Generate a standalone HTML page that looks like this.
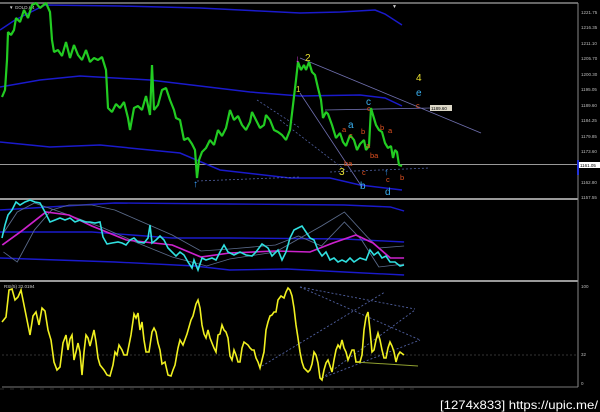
<!DOCTYPE html>
<html><head><style>
html,body{margin:0;padding:0;background:#000;width:600px;height:412px;overflow:hidden}
svg{display:block}
text{font-family:"Liberation Sans",sans-serif}
</style></head><body>
<svg width="600" height="412" viewBox="0 0 600 412" xmlns="http://www.w3.org/2000/svg">
<rect width="600" height="412" fill="#000"/>
<line x1="0" y1="3" x2="578" y2="3" stroke="#888" stroke-width="1.5"/>
<line x1="0" y1="199" x2="578" y2="199" stroke="#999" stroke-width="2"/>
<line x1="0" y1="281" x2="578" y2="281" stroke="#999" stroke-width="2"/>
<line x1="2" y1="387" x2="578" y2="387" stroke="#777" stroke-width="1"/>
<line x1="578" y1="3" x2="578" y2="387" stroke="#888" stroke-width="1"/>
<line x1="0" y1="164.5" x2="578" y2="164.5" stroke="#999" stroke-width="1"/>
<text x="9" y="9" fill="#ccc" font-size="4.5">▼ GOLD,H4</text>
<text x="392" y="8" fill="#ccc" font-size="5">▼</text>
<g fill="#bbb" font-size="4.5">
<text x="581" y="14">1221.75</text><text x="581" y="29">1216.35</text><text x="581" y="45">1211.10</text>
<text x="581" y="60">1205.70</text><text x="581" y="76">1200.30</text><text x="581" y="91">1195.05</text>
<text x="581" y="107">1189.60</text><text x="581" y="122">1184.25</text><text x="581" y="138">1179.85</text>
<text x="581" y="153">1173.60</text><text x="581" y="184">1162.80</text><text x="581" y="199">1157.55</text>
<text x="581" y="288">100</text><text x="581" y="356">32</text><text x="581" y="385">0</text>
</g>
<rect x="578" y="162" width="22" height="6" fill="#fff"/><text x="580" y="167" font-size="4.5" fill="#000">1161.05</text>
<rect x="577" y="160" width="2" height="15" fill="#2233dd"/>
<g fill="none" stroke="#1a1acc" stroke-width="1.5">
<path d="M0 30 L15 20 L45 5 L120 6 L200 8 L260 11 L300 13 L340 12 L375 10 L385 14 L402 25"/>
<path d="M0 87 L40 80 L80 76 L150 80 L250 92 L300 96 L360 95 L385 98 L402 106"/>
<path d="M0 142 L50 147 L100 145 L180 153 L220 170 L290 178 L330 178 L360 185 L402 190"/>
</g>
<g fill="none" stroke="#7070b0" stroke-width="0.8">
<line x1="300" y1="58" x2="481" y2="133"/>
<line x1="300" y1="93" x2="362" y2="187"/>
<line x1="325" y1="110" x2="432" y2="108"/>
</g>
<g fill="none" stroke="#5060a0" stroke-width="0.8" stroke-dasharray="2,2">
<line x1="257" y1="100" x2="300" y2="128"/>
<line x1="280" y1="120" x2="345" y2="170"/>
<line x1="197" y1="181" x2="300" y2="177"/>
<line x1="330" y1="172" x2="430" y2="168"/>
</g>
<polyline fill="none" stroke="#22cc22" stroke-width="2.2" stroke-linejoin="bevel" points="2,97 5,90 7,60 8,32 11,35 14,30 16,18 20,22 24,10 28,18 32,5 36,3 40,8 46,3 50,12 52,40 54,52 58,50 62,56 66,42 70,58 74,45 78,55 82,60 86,50 90,62 94,58 98,60 102,57 106,70 108,108 112,112 116,104 120,108 124,102 128,118 130,130 134,108 138,106 142,110 146,96 150,115 152,65 154,110 158,105 162,90 166,88 170,100 174,110 176,118 180,120 184,140 188,138 192,144 195,150 197,178 199,160 202,152 206,148 210,140 214,145 218,130 222,136 226,128 230,110 234,120 238,116 242,125 246,130 250,122 252,112 256,120 260,128 264,125 266,115 270,120 274,130 278,132 282,135 286,140 290,130 293,105 296,80 298,62 301,70 304,65 306,70 309,62 312,72 315,75 318,88 321,100 323,118 326,112 328,114 332,125 336,138 340,133 343,142 346,146 350,135 354,140 357,150 360,144 364,140 366,150 369,146 371,108 373,115 376,125 379,130 382,132 385,143 388,148 391,146 393,158 395,150 397,152 399,165 402,166"/>
<text x="295" y="62" fill="#e040e0" font-size="10">↓</text>
<text x="193" y="187" fill="#3aa0ff" font-size="10">↑</text>
<text x="384" y="175" fill="#3aa0ff" font-size="9">↑</text>
<g font-size="10">
<text x="305" y="61" fill="#e8e030">2</text><text x="296" y="92" fill="#e8e030" font-size="8">1</text>
<text x="339" y="175" fill="#e8e030">3</text><text x="416" y="81" fill="#e8e030">4</text>
<text x="366" y="105" fill="#3ab0f0">c</text><text x="348" y="128" fill="#3ab0f0">a</text>
<text x="360" y="189" fill="#3ab0f0">b</text><text x="385" y="195" fill="#3ab0f0">d</text>
<text x="416" y="96" fill="#3ab0f0">e</text>
</g>
<g font-size="7.5" fill="#e05020">
<text x="416" y="108">c</text><text x="367" y="111">c</text>
<text x="342" y="132">a</text><text x="349" y="138">c</text><text x="361" y="134">b</text>
<text x="380" y="130">b</text><text x="388" y="133">a</text><text x="366" y="148">a</text>
<text x="370" y="158">ba</text><text x="344" y="166">ba</text><text x="362" y="175">c</text>
<text x="386" y="182">c</text><text x="400" y="180">b</text>
</g>
<rect x="430" y="105" width="22" height="6" fill="#ddd8c8"/><text x="431" y="110" font-size="4.5" fill="#000">1189.60</text>
<g fill="none" stroke-width="1.3">
<g transform="scale(1.148,1)">
<path d="M0 210 L100 203 L200 204 L300 205 L340 207 L352 211" stroke="#1a1acc" stroke-width="1.4"/>
<path d="M0 232 L80 232 L150 238 L200 238 L300 239 L352 242" stroke="#1a1acc" stroke-width="1.4"/>
<path d="M0 258 L100 262 L170 266 L200 270 L250 269 L300 272 L352 275" stroke="#1a1acc" stroke-width="1.4"/>
<path d="M3 233 L15 212 L30 203 L60 215 L90 228 L120 243 L150 257 L180 266 L200 259 L240 252 L280 226 L300 212 L320 237 L330 248 L352 246" stroke="#5a6a8a" stroke-width="0.8"/>
<path d="M3 252 L15 262 L30 230 L45 210 L60 205 L80 205 L100 210 L120 220 L150 235 L175 251 L200 249 L240 245 L260 236 L280 246 L300 222 L315 240 L330 267 L352 264" stroke="#5a6a8a" stroke-width="0.8"/>
<path d="M2 245 L20 230 L40 212 L60 215 L80 226 L110 240 L150 245 L175 257 L200 253 L240 251 L270 252 L290 243 L310 235 L325 243 L340 258 L352 258" stroke="#cc22cc" stroke-width="1.6"/>
</g>
<polyline stroke="#30e0e0" stroke-width="1.6" points="2,238 5,225 8,215 12,210 16,202 20,205 25,202 30,200 35,202 40,203 45,212 50,222 55,220 60,218 65,220 70,218 75,222 80,220 85,222 90,222 95,223 100,222 103,237 107,244 112,243 118,242 122,243 126,245 130,240 134,238 138,242 144,243 148,238 150,225 152,243 156,240 160,236 164,240 168,248 172,252 176,256 180,252 184,255 188,262 192,268 194,260 198,270 202,258 206,260 212,258 216,260 220,252 224,245 228,252 234,255 240,252 246,255 252,256 256,252 262,244 268,248 272,256 278,250 282,260 286,252 290,238 294,230 298,228 302,226 306,232 310,238 314,240 318,250 322,256 326,252 330,260 334,258 338,262 342,260 346,262 350,258 354,262 360,258 366,260 370,250 374,255 378,252 382,258 386,256 390,262 395,262 400,266 404,265"/>
</g>
<line x1="2" y1="355" x2="578" y2="355" stroke="#666" stroke-width="0.6" stroke-dasharray="2,2"/>
<text x="4" y="288" fill="#ccc" font-size="4.5">RSI(5) 32.0194</text>
<g fill="none" stroke="#5060a0" stroke-width="0.9" stroke-dasharray="2,2">
<line x1="300" y1="287" x2="415" y2="309"/><line x1="300" y1="287" x2="420" y2="340"/>
<line x1="262" y1="366" x2="385" y2="292"/><line x1="322" y1="378" x2="415" y2="310"/>
<line x1="322" y1="378" x2="420" y2="340"/>
</g>
<line x1="355" y1="362" x2="418" y2="366" stroke="#90a030" stroke-width="1"/>
<polyline fill="none" stroke="#f0f020" stroke-width="1.6" points="2,322 6,317 9,290 12,289 15,300 18,297 21,290 24,305 27,320 30,335 33,316 36,312 39,325 42,308 45,311 48,330 51,340 54,362 57,370 60,367 63,343 66,335 68,350 70,339 72,335 74,360 76,352 78,343 80,352 82,375 84,352 86,335 88,338 90,346 94,330 96,342 98,358 100,365 104,370 107,375 110,376 113,365 115,352 117,355 119,345 122,350 124,355 127,355 131,335 134,314 136,318 138,313 140,330 142,322 144,340 146,352 149,352 152,332 154,328 156,332 158,343 160,350 162,364 165,362 168,375 171,376 173,370 175,365 178,348 180,340 183,345 187,334 191,320 193,316 196,304 198,300 200,308 202,325 204,334 206,338 208,330 210,338 214,348 216,352 218,335 220,334 222,325 224,330 226,332 228,338 230,356 232,360 234,350 236,355 238,362 240,362 242,348 244,342 248,345 250,348 252,350 254,350 256,358 258,362 260,368 264,352 266,330 268,322 270,316 272,315 274,312 276,312 278,300 281,296 284,298 286,292 288,288 290,290 292,296 294,308 296,325 298,338 300,352 302,362 304,368 306,370 308,372 310,370 312,364 314,352 316,355 318,363 320,378 322,380 324,370 326,363 328,360 330,366 332,372 334,360 336,350 338,345 340,348 342,340 344,348 346,352 348,360 350,355 352,350 354,350 356,362 358,362 360,362 362,355 364,330 366,317 368,312 370,330 372,352 374,350 376,340 378,333 380,340 382,350 384,358 386,358 388,348 390,342 392,346 394,352 396,362 398,355 400,352 404,355"/>
<line x1="0" y1="389" x2="415" y2="389" stroke="#555" stroke-width="0.6" stroke-dasharray="4,6"/>
<text x="440" y="409" fill="#fff" font-size="12" font-family="Liberation Sans Narrow,Liberation Sans,sans-serif" textLength="158" lengthAdjust="spacingAndGlyphs">[1274x833] https://upic.me/</text>
</svg>
</body></html>
